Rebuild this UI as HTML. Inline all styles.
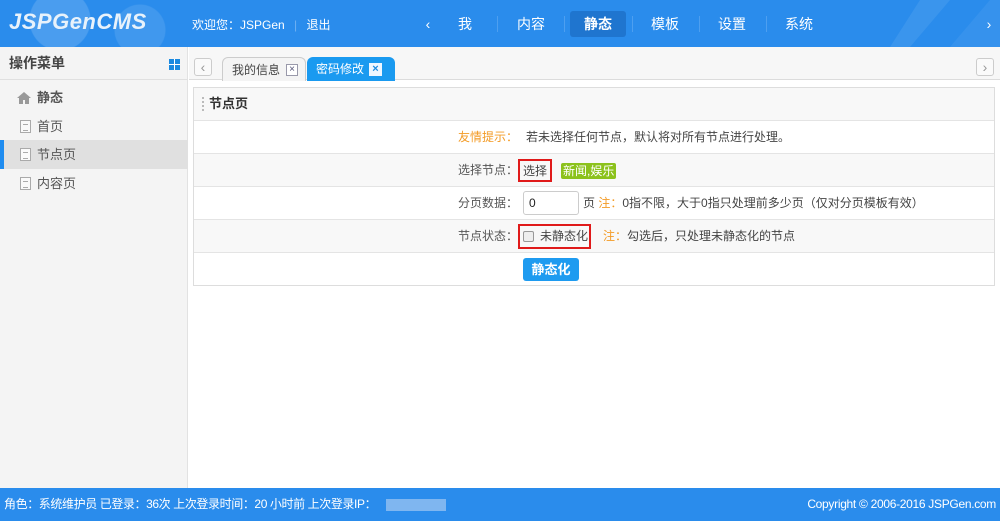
<!DOCTYPE html>
<html><head><meta charset="utf-8"><style>
*{margin:0;padding:0;box-sizing:border-box}
body{width:1000px;height:521px;overflow:hidden;font-family:"Liberation Sans","Noto Sans CJK SC",sans-serif;font-size:12px;color:#444;background:#fff;position:relative}
.a{position:absolute}
#hd{left:0;top:0;width:1000px;height:47px;background:#2a8cec;color:#fff}
.nav{top:11px;height:26px;line-height:26px;font-size:14px;color:#fff;text-align:center}
.sep{top:16px;width:1px;height:16px;background:#4d9ff0}
#sb{left:0;top:47px;width:188px;height:441px;background:#f4f4f4;border-right:1px solid #e2e2e2}
.mi{left:0;width:188px;height:29px;line-height:29px;font-size:13px;color:#555;padding-left:37px}
.doc{position:absolute;left:20px;top:8px;width:11px;height:13px;border:1px solid #aaa;background:#fafafa}
.doc:after{content:"";position:absolute;left:2px;top:3px;width:5px;height:5px;border-top:1px solid #aaa;border-bottom:1px solid #aaa}
.row{left:194px;width:800px;height:33px;border-top:1px solid #e4e4e4;line-height:32px}
.lb{position:absolute;right:476px;top:0;color:#555}
.or{color:#f39b26}
.c{position:absolute;left:324px;top:0}
#ft{left:0;top:488px;width:1000px;height:33px;background:#2a8cec;color:#fff;line-height:33px;font-size:12px}
</style></head><body>
<div id="hd" class="a">
  <div class="a" style="left:0;top:0;width:420px;height:47px;background:radial-gradient(circle at 60px 20px,rgba(255,255,255,.15) 0 30px,transparent 31px),radial-gradient(circle at 140px 30px,rgba(255,255,255,.1) 0 25px,transparent 26px)"></div>
  <div class="a" style="left:9px;top:9px;font-size:22px;font-style:italic;font-weight:bold;color:#e8f2fb;letter-spacing:0.5px">JSPGenCMS</div>
  <div class="a" style="left:192px;top:16px;font-size:12px">欢迎您：JSPGen <span style="color:#6eb0f2;margin:0 6px">|</span> 退出</div>
  <div class="a nav" style="left:418px;width:20px">‹</div>
  <div class="a nav" style="left:445px;width:40px">我</div>
  <div class="a sep" style="left:497px"></div>
  <div class="a nav" style="left:508px;width:46px">内容</div>
  <div class="a sep" style="left:564px"></div>
  <div class="a nav" style="left:570px;width:56px;background:#1f75cf;border-radius:3px;font-weight:bold">静态</div>
  <div class="a sep" style="left:632px"></div>
  <div class="a nav" style="left:642px;width:46px">模板</div>
  <div class="a sep" style="left:699px"></div>
  <div class="a nav" style="left:709px;width:46px">设置</div>
  <div class="a sep" style="left:766px"></div>
  <div class="a nav" style="left:776px;width:46px">系统</div>
  <div class="a nav" style="left:982px;width:14px">›</div>
  <svg class="a" style="left:790px;top:0" width="210" height="47"><polygon points="100,47 130,0 160,0 120,47" fill="rgba(255,255,255,.08)"/><polygon points="160,47 200,0 210,0 210,47" fill="rgba(255,255,255,.06)"/></svg>
</div>
<div id="sb" class="a">
  <div class="a" style="left:0;top:0;width:188px;height:33px;border-bottom:1px solid #e0e0e0;line-height:33px;padding-left:9px;font-size:14px;font-weight:bold;color:#444">操作菜单</div>
  <div class="a" style="left:169px;top:12px;width:11px;height:11px;background:linear-gradient(#fff,#fff) 5px 0/1px 11px no-repeat,linear-gradient(#fff,#fff) 0 5px/11px 1px no-repeat,#1a8ae0"></div>
  <div class="a mi" style="top:36px;font-weight:bold">静态<svg class="a" style="left:17px;top:9px" width="14" height="12"><path d="M7 0L0 6h2v6h4V8h2v4h4V6h2z" fill="#999"/></svg></div>
  <div class="a mi" style="top:65px"><span class="doc"></span>首页</div>
  <div class="a mi" style="top:93px;background:#e0e0e0"><div class="a" style="left:0;top:0;width:4px;height:29px;background:#1f8cf0"></div><span class="doc"></span>节点页</div>
  <div class="a mi" style="top:122px"><span class="doc"></span>内容页</div>
</div>
<div class="a" style="left:189px;top:47px;width:811px;height:33px;background:#f7f7f7;border-bottom:1px solid #dcdcdc"></div>
<div class="a" style="left:194px;top:58px;width:18px;height:18px;border:1px solid #ccc;border-radius:3px;background:#fafafa;color:#999;text-align:center;line-height:16px;font-size:14px">‹</div>
<div class="a" style="left:976px;top:58px;width:18px;height:18px;border:1px solid #ccc;border-radius:3px;background:#fafafa;color:#999;text-align:center;line-height:16px;font-size:14px">›</div>
<div class="a" style="left:222px;top:57px;width:84px;height:24px;background:#f4f4f4;border:1px solid #ccc;border-bottom:none;border-radius:6px 6px 0 0;line-height:24px;padding-left:9px;color:#444">我的信息<span class="a" style="left:63px;top:6px;width:12px;height:12px;border:1px solid #99a;background:#fff;color:#557;font-size:10px;line-height:10px;text-align:center">×</span></div>
<div class="a" style="left:307px;top:57px;width:88px;height:24px;background:#1a9af0;border-radius:6px 6px 0 0;line-height:24px;padding-left:9px;color:#fff">密码修改<span class="a" style="left:62px;top:6px;width:13px;height:13px;background:#eef6ff;color:#1a8ae0;font-size:11px;line-height:12px;text-align:center;font-weight:bold">×</span></div>
<div class="a" style="left:193px;top:87px;width:802px;height:199px;border:1px solid #ddd"></div>
<div class="a" style="left:194px;top:88px;width:800px;height:32px;background:#f8f8f8;line-height:32px;padding-left:15px;font-size:13px;font-weight:bold;color:#333">节点页<div class="a" style="left:8px;top:9px;width:2px;height:14px;border-left:2px dotted #bbb"></div></div>
<div class="a row" style="top:120px"><span class="lb or">友情提示：</span><span class="c" style="left:332px">若未选择任何节点，默认将对所有节点进行处理。</span></div>
<div class="a row" style="top:153px;background:#f8f8f8"><span class="lb">选择节点：</span><span class="c" style="left:324px;top:5px;height:23px;line-height:20px;border:2px solid #e01a1a;padding:0 3px">选择</span><span class="c" style="left:367px;top:9px;height:16px;line-height:16px;background:#8cc21c;color:#fff;padding:0 2px;border-radius:2px">新闻,娱乐</span></div>
<div class="a row" style="top:186px"><span class="lb">分页数据：</span><span class="c" style="left:329px;top:4px;width:56px;height:24px;border:1px solid #ccc;border-radius:3px;line-height:22px;padding-left:5px;color:#222;background:#fff">0</span><span class="c" style="left:389px">页 <span class="or">注：</span>0指不限，大于0指只处理前多少页（仅对分页模板有效）</span></div>
<div class="a row" style="top:219px;background:#f8f8f8"><span class="lb">节点状态：</span><span class="c" style="left:324px;top:4px;width:73px;height:25px;border:2px solid #e01a1a;line-height:21px;padding-left:20px">未静态化<span class="a" style="left:3px;top:5px;width:11px;height:11px;border:1px solid #999;border-radius:2px;background:#eee"></span></span><span class="c" style="left:409px"><span class="or">注：</span>勾选后，只处理未静态化的节点</span></div>
<div class="a row" style="top:252px"><span class="c" style="left:329px;top:5px;width:56px;height:23px;background:#1e9bf0;border-radius:3px;color:#fff;text-align:center;line-height:23px;font-size:13px;font-weight:bold">静态化</span></div>
<div id="ft" class="a"><span style="padding-left:4px;letter-spacing:-0.4px">角色：系统维护员&nbsp;已登录：36次&nbsp;上次登录时间：20 小时前&nbsp;上次登录IP：</span><span class="a" style="left:386px;top:11px;width:60px;height:12px;background:#7fb6f0"></span><span class="a" style="right:4px;top:0;letter-spacing:-0.3px">Copyright © 2006-2016 JSPGen.com</span></div>
</body></html>
